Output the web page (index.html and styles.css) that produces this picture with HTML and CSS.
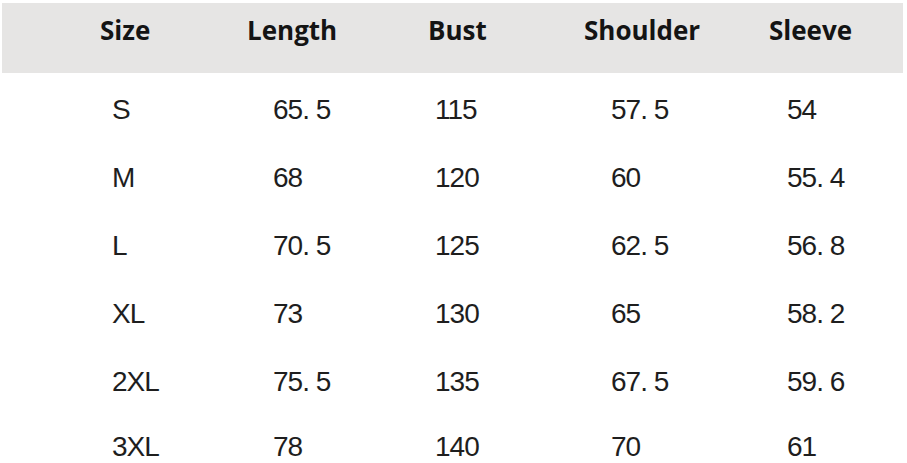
FILE: index.html
```html
<!DOCTYPE html>
<html lang="en">
<head>
<meta charset="utf-8">
<title>Size chart</title>
<link rel="stylesheet" href="styles.css">
</head>
<body>
<div class="chart">
  <div class="row head">
    <div class="cell c1">Size</div>
    <div class="cell c2">Length</div>
    <div class="cell c3">Bust</div>
    <div class="cell c4">Shoulder</div>
    <div class="cell c5">Sleeve</div>
  </div>
  <div class="row">
    <div class="cell c1">S</div>
    <div class="cell c2">65. 5</div>
    <div class="cell c3">115</div>
    <div class="cell c4">57. 5</div>
    <div class="cell c5">54</div>
  </div>
  <div class="row">
    <div class="cell c1">M</div>
    <div class="cell c2">68</div>
    <div class="cell c3">120</div>
    <div class="cell c4">60</div>
    <div class="cell c5">55. 4</div>
  </div>
  <div class="row">
    <div class="cell c1">L</div>
    <div class="cell c2">70. 5</div>
    <div class="cell c3">125</div>
    <div class="cell c4">62. 5</div>
    <div class="cell c5">56. 8</div>
  </div>
  <div class="row">
    <div class="cell c1">XL</div>
    <div class="cell c2">73</div>
    <div class="cell c3">130</div>
    <div class="cell c4">65</div>
    <div class="cell c5">58. 2</div>
  </div>
  <div class="row">
    <div class="cell c1">2XL</div>
    <div class="cell c2">75. 5</div>
    <div class="cell c3">135</div>
    <div class="cell c4">67. 5</div>
    <div class="cell c5">59. 6</div>
  </div>
  <div class="row last">
    <div class="cell c1">3XL</div>
    <div class="cell c2">78</div>
    <div class="cell c3">140</div>
    <div class="cell c4">70</div>
    <div class="cell c5">61</div>
  </div>
</div>
</body>
</html>
```
FILE: styles.css
```css
html, body {
  margin: 0;
  padding: 0;
  background: #ffffff;
  overflow: hidden;
}

.chart {
  display: flex;
  flex-direction: column;
  padding-top: 3px;
}

.row {
  display: grid;
  grid-template-columns: 98px 147px 181px 156px 185px 1fr;
  font-family: "Liberation Sans", Arial, sans-serif;
  font-size: 28px;
  letter-spacing: -1px;
  line-height: 68px;
  height: 68px;
  color: #1e1e1e;
}

.row.head {
  background: #e6e5e4;
  margin: 0 4px 3px 2px;
  height: 70px;
  line-height: 26px;
  padding-top: 14px;
  box-sizing: border-box;
  font-family: "Open Sans", "Noto Sans", sans-serif;
  font-weight: 700;
  font-size: 26px;
  letter-spacing: 0;
  color: #141414;
}

.row.last {
  height: 46px;
  line-height: 31px;
  padding-top: 15px;
  box-sizing: border-box;
}

.row .c1 { grid-column: 2; padding-left: 14px; }
.row .c2 { grid-column: 3; padding-left: 28px; }
.row .c3 { grid-column: 4; padding-left: 9px; }
.row .c4 { grid-column: 5; padding-left: 29px; }
.row .c5 { grid-column: 6; padding-left: 20px; }

.row.head .cell { padding-left: 0; }

.cell {
  white-space: nowrap;
}
```
